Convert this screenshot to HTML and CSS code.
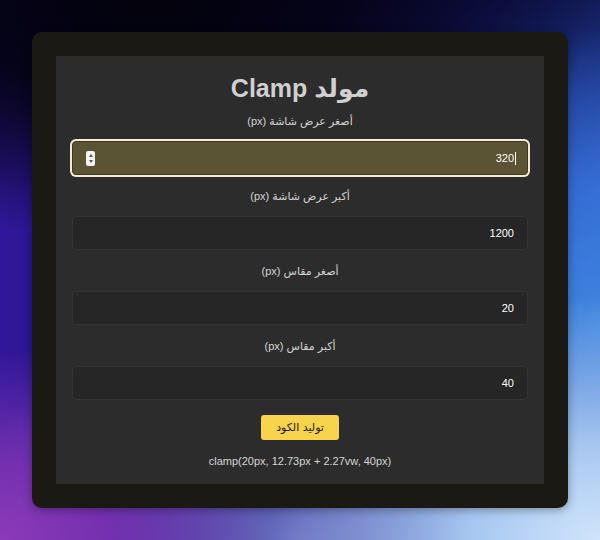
FILE: index.html
```html
<!DOCTYPE html>
<html lang="ar" dir="rtl">
<head>
<meta charset="utf-8">
<title>مولد Clamp</title>
<link rel="stylesheet" href="styles.css">
</head>
<body>
<div class="frame">
  <main class="panel">
    <h1 class="title">مولد Clamp</h1>
    <label class="label" for="minW">أصغر عرض شاشة (px)</label>
    <div class="field field-active">
      <input class="input" id="minW" type="text" value="320">
      <span class="caret"></span>
      <span class="spin"><span class="up"></span><span class="down"></span></span>
    </div>
    <label class="label" for="maxW">أكبر عرض شاشة (px)</label>
    <div class="field"><input class="input" id="maxW" type="text" value="1200"></div>
    <label class="label" for="minS">أصغر مقاس (px)</label>
    <div class="field"><input class="input" id="minS" type="text" value="20"></div>
    <label class="label" for="maxS">أكبر مقاس (px)</label>
    <div class="field"><input class="input" id="maxS" type="text" value="40"></div>
    <button class="btn" type="button">توليد الكود</button>
    <p class="result" dir="ltr">clamp(20px, 12.73px + 2.27vw, 40px)</p>
  </main>
</div>
</body>
</html>
```
FILE: styles.css
```css
html, body { height: 100%; }
body {
  margin: 0;
  padding: 32px;
  box-sizing: border-box;
  font-family: "Liberation Sans", "DejaVu Sans", sans-serif;
  background-color: #1a1670;
  background-image:
    radial-gradient(ellipse 55% 45% at 100% 100%, #d0e5fb 0%, #a6c6f0 40%, rgba(140,180,235,0) 100%),
    radial-gradient(ellipse 45% 35% at 0% 100%, #8c3ab8 0%, #7430b0 40%, rgba(100,40,170,0) 100%),
    radial-gradient(ellipse 60% 40% at 50% 100%, #6a70c0 0%, rgba(100,110,190,0) 100%),
    radial-gradient(ellipse 40% 55% at 100% 60%, #3f86de 0%, rgba(50,110,210,0) 100%),
    radial-gradient(ellipse 75% 45% at 25% 0%, #03020c 0%, #050318 40%, rgba(6,4,30,0) 100%),
    linear-gradient(180deg, rgba(8,6,40,0.7) 0%, rgba(8,6,40,0) 35%),
    linear-gradient(90deg, #30179a 0%, #1c1474 45%, #1e2aa0 75%, #2a52cc 100%);
}
.frame {
  background: #1b1913;
  border-radius: 10px;
  padding: 24px;
  height: 476px;
  box-sizing: border-box;
  box-shadow: 0 2px 10px rgba(0,0,0,0.35);
}
.panel {
  background: #2c2c2c;
  height: 428px;
  box-sizing: border-box;
  padding: 15px 16px 0;
  display: flex;
  flex-direction: column;
  align-items: stretch;
}
.title {
  margin: 0;
  font-size: 25px;
  line-height: 34px;
  font-weight: 700;
  color: #d0d0d0;
  text-align: center;
}
.label {
  display: block;
  text-align: center;
  font-size: 11px;
  line-height: 18px;
  color: #d4d4d4;
  margin: 6px 0 11px;
}
.title + .label { margin-top: 7px; }
.field {
  position: relative;
  height: 34px;
  margin-bottom: 6px;
}
.input {
  display: block;
  width: 100%;
  height: 100%;
  box-sizing: border-box;
  background: #262626;
  border: 1px solid #343434;
  border-radius: 4px;
  padding: 0 13px;
  font-family: "Liberation Sans", sans-serif;
  font-size: 11px;
  color: #ffffff;
  text-align: right;
  direction: rtl;
  outline: none;
}
.field-active .input {
  background: #5a5334;
  border: 1px solid #3e3a22;
  box-shadow: 0 0 0 2px #f1ecd6;
}
.caret {
  position: absolute;
  right: 12px;
  top: 11px;
  width: 1px;
  height: 13px;
  background: #ffffff;
}
.spin {
  position: absolute;
  left: 14px;
  top: 10px;
  width: 9px;
  height: 15px;
  background: #f2f2f2;
  border-radius: 2px;
  display: flex;
  flex-direction: column;
  align-items: center;
  justify-content: center;
  gap: 3px;
}
.up, .down {
  width: 0;
  height: 0;
  border-left: 2px solid transparent;
  border-right: 2px solid transparent;
}
.up { border-bottom: 3px solid #555; }
.down { border-top: 3px solid #555; }
.btn {
  align-self: center;
  margin-top: 9px;
  width: 78px;
  height: 25px;
  background: #f8d34c;
  color: #1a1a1a;
  border: none;
  border-radius: 3px;
  font-family: "DejaVu Sans", sans-serif;
  font-size: 11px;
  font-weight: 400;
  padding: 0;
}
.result {
  margin: 13px 0 0;
  text-align: center;
  font-size: 11px;
  line-height: 16px;
  color: #d6d6d6;
}
```
